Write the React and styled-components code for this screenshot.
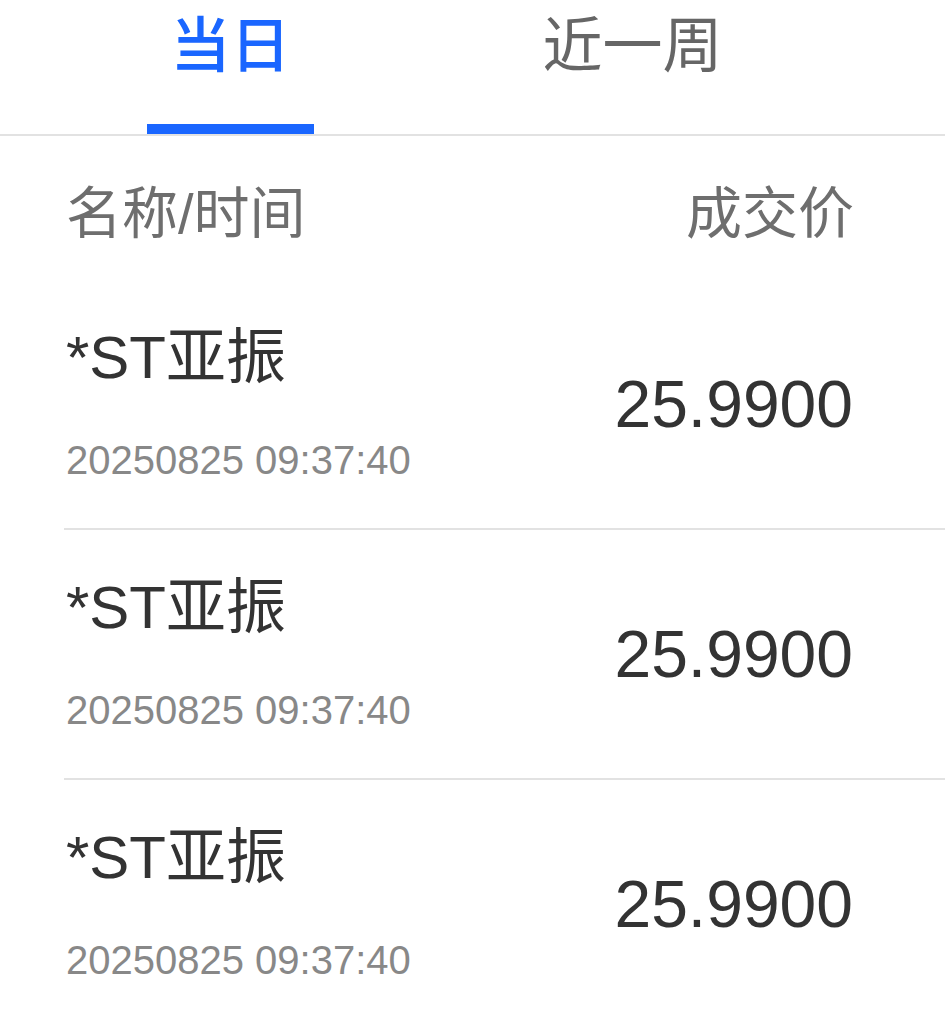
import styled, { createGlobalStyle } from "styled-components";
import { useState } from "react";

const GlobalStyle = createGlobalStyle`
  body {
    margin: 0;
    background: #fff;
    font-family: "Liberation Sans", "Noto Sans CJK SC", sans-serif;
  }
`;

const trades = [
  { name: "*ST亚振", time: "20250825 09:37:40", price: "25.9900" },
  { name: "*ST亚振", time: "20250825 09:37:40", price: "25.9900" },
  { name: "*ST亚振", time: "20250825 09:37:40", price: "25.9900" },
];

function App() {
  const [tab, setTab] = useState(0);
  const tabs = ["当日", "近一周"];
  return (
    <Page>
      <GlobalStyle />
      <TabBar>
        {tabs.map((t, i) => (
          <Tab key={t} active={i === tab} onClick={() => setTab(i)}>
            {t}
          </Tab>
        ))}
      </TabBar>
      <HeadRow>
        <span>名称/时间</span>
        <span>成交价</span>
      </HeadRow>
      {trades.map((r, i) => (
        <Row key={i}>
          <Left>
            <Name>{r.name}</Name>
            <Time>{r.time}</Time>
          </Left>
          <Price>{r.price}</Price>
        </Row>
      ))}
    </Page>
  );
}

export default App;

const Page = styled.div`
  width: 945px;
  min-height: 1024px;
  background: #fff;
`;

const TabBar = styled.div`
  display: flex;
  gap: 205px;
  height: 134px;
  padding-left: 147px;
  border-bottom: 2px solid #e2e2e2;
`;

const Tab = styled.div`
  position: relative;
  padding: 17px 23.5px 0;
  font-size: 60px;
  line-height: 60px;
  font-weight: ${(p) => (p.active ? 500 : 400)};
  color: ${(p) => (p.active ? "#1a66ff" : "#666")};
  cursor: pointer;
  &::after {
    content: "";
    display: ${(p) => (p.active ? "block" : "none")};
    position: absolute;
    left: 0;
    right: 0;
    bottom: 0;
    height: 10px;
    background: #1a66ff;
  }
`;

const HeadRow = styled.div`
  display: flex;
  justify-content: space-between;
  align-items: center;
  height: 144px;
  padding: 0 91px 0 66px;
  font-size: 56px;
  color: #6e6e6e;
`;

const Row = styled.div`
  display: flex;
  justify-content: space-between;
  align-items: center;
  height: 248px;
  margin-left: 64px;
  padding: 0 92px 0 2px;
  border-bottom: 2px solid #e2e2e2;
  &:last-child {
    border-bottom: none;
  }
`;

const Left = styled.div`
  display: flex;
  flex-direction: column;
  gap: 52px;
`;

const Name = styled.div`
  font-size: 60px;
  line-height: 60px;
  color: #333;
`;

const Time = styled.div`
  font-size: 40px;
  line-height: 40px;
  color: #888;
`;

const Price = styled.div`
  font-size: 66px;
  line-height: 66px;
  color: #333;
`;
